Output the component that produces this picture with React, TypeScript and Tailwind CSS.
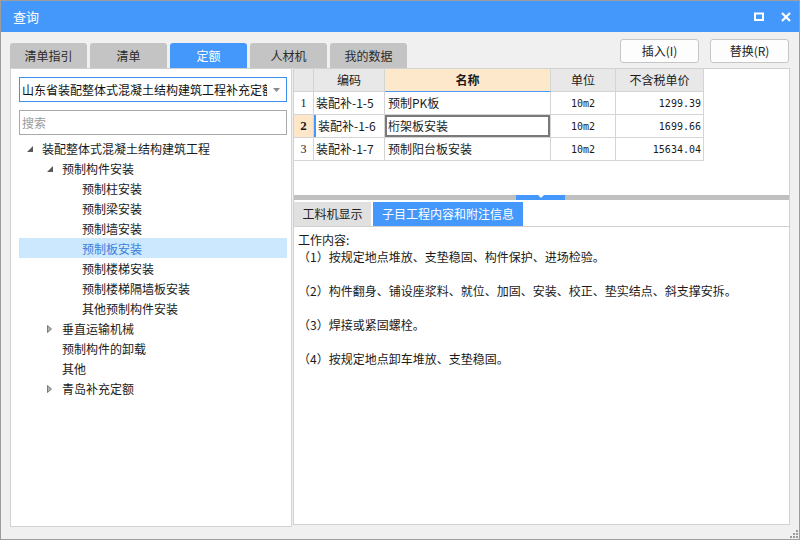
import React from "react";

type TreeItem = { label: string; level: number; toggle?: "open" | "closed"; selected?: boolean };

const tree: TreeItem[] = [
  { label: "装配整体式混凝土结构建筑工程", level: 0, toggle: "open" },
  { label: "预制构件安装", level: 1, toggle: "open" },
  { label: "预制柱安装", level: 2 },
  { label: "预制梁安装", level: 2 },
  { label: "预制墙安装", level: 2 },
  { label: "预制板安装", level: 2, selected: true },
  { label: "预制楼梯安装", level: 2 },
  { label: "预制楼梯隔墙板安装", level: 2 },
  { label: "其他预制构件安装", level: 2 },
  { label: "垂直运输机械", level: 1, toggle: "closed" },
  { label: "预制构件的卸载", level: 1 },
  { label: "其他", level: 1 },
  { label: "青岛补充定额", level: 1, toggle: "closed" },
];

const rows = [
  { n: "1", code: "装配补-1-5", name: "预制PK板", unit: "10m2", price: "1299.39" },
  { n: "2", code: "装配补-1-6", name: "桁架板安装", unit: "10m2", price: "1699.66", active: true },
  { n: "3", code: "装配补-1-7", name: "预制阳台板安装", unit: "10m2", price: "15634.04" },
];

function Toggle({ kind }: { kind?: "open" | "closed" }) {
  return (
    <span className="w-[15px] h-[20px] flex items-center shrink-0 pt-[2px]">
      {kind === "open" && (
        <svg width="6" height="6" viewBox="0 0 6 6">
          <polygon points="6,0 6,6 0,6" fill="#5a5a5a" />
        </svg>
      )}
      {kind === "closed" && (
        <svg width="6" height="8" viewBox="0 0 6 8">
          <polygon points="0.5,0.5 4.5,4 0.5,7.5" fill="#b0b0b0" stroke="#7c7c7c" strokeWidth="1" />
        </svg>
      )}
    </span>
  );
}

export default function App() {
  return (
    <div className="w-[800px] h-[540px] bg-[#f0f0f0] border border-[#9d9d9d] flex flex-col font-['Noto_Sans_CJK_SC',sans-serif] text-[12px] text-[#1a1a1a] relative overflow-hidden">
      {/* title bar */}
      <div className="h-[31px] bg-[#4598fb] flex items-center pl-[12px] pr-[8px] shrink-0">
        <span className="text-white text-[13px] leading-none">查询</span>
        <div className="ml-auto flex items-center gap-[17px]">
          <svg width="10" height="9" viewBox="0 0 10 9">
            <rect x="1" y="1.5" width="8" height="6.5" fill="none" stroke="#fff" strokeWidth="2" />
          </svg>
          <svg width="10" height="10" viewBox="0 0 10 10">
            <path d="M1 1 L9 9 M9 1 L1 9" stroke="#fff" strokeWidth="2.2" />
          </svg>
        </div>
      </div>

      {/* tabs + buttons row */}
      <div className="h-[36px] flex pl-[9px] pr-[9px] shrink-0">
        <div className="self-end flex gap-[3px]">
          {["清单指引", "清单", "定额", "人材机", "我的数据"].map((t) => (
            <div
              key={t}
              className={
                t === "定额"
                  ? "w-[77px] h-[25px] rounded-t-[3px] bg-[#4598fb] text-white text-[12px] flex items-center justify-center"
                  : "w-[77px] h-[25px] rounded-t-[3px] bg-[#c4c4c4] text-[#2a2a2a] text-[12px] flex items-center justify-center"
              }
            >
              {t}
            </div>
          ))}
        </div>
        <div className="ml-auto mt-[7px] flex gap-[11px] self-start pr-[1px]">
          <div className="w-[79px] h-[24px] bg-[#fdfdfd] border border-[#c6c6c6] rounded-[3px] flex items-center justify-center text-[12px] text-[#222]">
            插入(I)
          </div>
          <div className="w-[79px] h-[24px] bg-[#fdfdfd] border border-[#c6c6c6] rounded-[3px] flex items-center justify-center text-[12px] text-[#222]">
            替换(R)
          </div>
        </div>
      </div>

      {/* main row */}
      <div className="flex pl-[9px] gap-[1px]">
        {/* left panel */}
        <div className="w-[282px] h-[459px] bg-white border border-[#d2d2d2] pl-[8px] pr-[4px] pt-[8px] flex flex-col">
          <div className="h-[25px] border border-[#3f8fec] flex items-center pl-[2px] pr-[6px]">
            <div className="flex-1 overflow-hidden whitespace-nowrap text-[12px] text-[#111] leading-[23px]">
              山东省装配整体式混凝土结构建筑工程补充定额
            </div>
            <svg width="7" height="4" viewBox="0 0 7 4" className="ml-[6px] shrink-0">
              <polygon points="0,0 7,0 3.5,4" fill="#8a8a8a" />
            </svg>
          </div>
          <div className="h-[25px] mt-[8px] border border-[#aaaaaa] flex items-center pl-[2px] text-[#9a9a9a] text-[12px]">
            搜索
          </div>
          <div className="mt-[3px] flex flex-col">
            {tree.map((it) => (
              <div
                key={it.label}
                className={
                  "h-[20px] flex items-center whitespace-nowrap " +
                  (it.selected ? "bg-[#cce8ff] text-[#3a7fd8]" : "text-[#1a1a1a]")
                }
                style={{ paddingLeft: 8 + it.level * 20 }}
              >
                <Toggle kind={it.toggle} />
                <span className="leading-[20px] pt-[2px]">{it.label}</span>
              </div>
            ))}
          </div>
        </div>

        {/* right panel */}
        <div className="w-[497px] h-[457px] bg-white border border-[#d2d2d2] flex flex-col">
          <div className="h-[126px] shrink-0">
            <div className="flex flex-col w-[410px]">
              {/* header */}
              <div className="flex h-[23px] text-[12px]">
                <div className="w-[20px] bg-[#e8e8e8] border-r border-b border-[#d4d4d4]" />
                <div className="w-[71px] bg-[#e8e8e8] border-r border-b border-[#d4d4d4] flex items-center justify-center">编码</div>
                <div className="w-[166px] bg-[#fee8cb] border-r border-[#d4d4d4] border-b border-b-[#4a9bf5] flex items-center justify-center font-bold">名称</div>
                <div className="w-[65px] bg-[#e8e8e8] border-r border-b border-[#d4d4d4] flex items-center justify-center">单位</div>
                <div className="w-[88px] bg-[#e8e8e8] border-r border-b border-[#d4d4d4] flex items-center justify-center">不含税单价</div>
              </div>
              {rows.map((r) => (
                <div key={r.n} className="flex h-[23px] text-[12px]">
                  <div
                    className={
                      "w-[20px] border-r border-b border-[#d4d4d4] flex items-center justify-center font-['Liberation_Serif',serif] " +
                      (r.active ? "bg-[#fde7c8] font-bold text-[13px]" : "text-[12px]")
                    }
                  >
                    {r.n}
                  </div>
                  <div className="w-[71px] border-r border-b border-[#d4d4d4]">
                    <div
                      className={
                        "h-full flex items-center pl-[2px] whitespace-nowrap " +
                        (r.active ? "border-l-2 border-[#4598fb] pl-0" : "")
                      }
                    >
                      {r.code}
                    </div>
                  </div>
                  <div className="w-[166px] border-r border-b border-[#d4d4d4]">
                    <div
                      className={
                        "h-full flex items-center whitespace-nowrap " +
                        (r.active ? "border-2 border-[#7a7a7a] pl-[1px]" : "pl-[3px]")
                      }
                    >
                      {r.name}
                    </div>
                  </div>
                  <div className="w-[65px] border-r border-b border-[#d4d4d4] flex items-center justify-center font-['DejaVu_Sans_Mono',monospace] text-[10px]">
                    {r.unit}
                  </div>
                  <div className="w-[88px] border-r border-b border-[#d4d4d4] flex items-center justify-end pr-[2px] font-['DejaVu_Sans_Mono',monospace] text-[10px]">
                    {r.price}
                  </div>
                </div>
              ))}
            </div>
          </div>

          {/* splitter */}
          <div className="h-[5px] bg-[#c0c0c0] flex shrink-0">
            <div className="w-[222px]" />
            <div className="w-[49px] bg-[#4598fb] flex justify-center items-start">
              <svg width="6" height="3" viewBox="0 0 6 3">
                <polygon points="0,0 6,0 3,3" fill="#fff" />
              </svg>
            </div>
          </div>

          {/* bottom tabs */}
          <div className="pt-[2px] flex gap-[2px] shrink-0">
            <div className="w-[77px] h-[24px] bg-[#e0e0e0] flex items-center justify-center text-[12px] text-[#222]">
              工料机显示
            </div>
            <div className="w-[150px] h-[24px] bg-[#4598fb] flex items-center justify-center text-[12px] text-white">
              子目工程内容和附注信息
            </div>
          </div>

          {/* content */}
          <div className="flex-1 border-t border-[#d2d2d2] pl-[4px] pt-[4px] text-[12px] leading-[17px] text-[#1a1a1a]">
            <div>工作内容:</div>
            <div>（1）按规定地点堆放、支垫稳固、构件保护、进场检验。</div>
            <div className="h-[17px]" />
            <div>（2）构件翻身、铺设座浆料、就位、加固、安装、校正、垫实结点、斜支撑安拆。</div>
            <div className="h-[17px]" />
            <div>（3）焊接或紧固螺栓。</div>
            <div className="h-[17px]" />
            <div>（4）按规定地点卸车堆放、支垫稳固。</div>
          </div>
        </div>
      </div>

      {/* resize grip */}
      <svg width="8" height="8" viewBox="0 0 8 8" className="absolute right-[1px] bottom-[1px]">
        <rect x="6" y="0" width="2" height="2" fill="#9a9a9a" />
        <rect x="3" y="3" width="2" height="2" fill="#9a9a9a" />
        <rect x="6" y="3" width="2" height="2" fill="#9a9a9a" />
        <rect x="0" y="6" width="2" height="2" fill="#9a9a9a" />
        <rect x="3" y="6" width="2" height="2" fill="#9a9a9a" />
        <rect x="6" y="6" width="2" height="2" fill="#9a9a9a" />
      </svg>
    </div>
  );
}
